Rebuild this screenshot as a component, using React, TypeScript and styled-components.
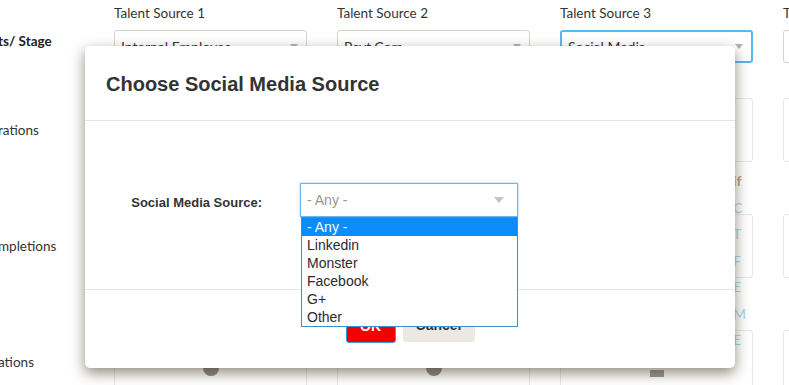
import React from 'react'
import styled, { createGlobalStyle } from 'styled-components'

const GlobalStyle = createGlobalStyle`
	html, body {
		margin: 0;
		padding: 0;
		background: #ffffff;
	}
	body {
		font-family: Lato, 'Noto Sans', sans-serif;
		overflow: hidden;
	}
`

const sources = [
	{ caption: 'Talent Source 1', value: 'Internal Employee', mark: 'circle' },
	{ caption: 'Talent Source 2', value: 'Rcvt.Com', mark: 'circle' },
	{ caption: 'Talent Source 3', value: 'Social Media', mark: 'bar', focused: true },
	{ caption: 'Talent Source 4', value: '', mark: 'none' },
]

const rowLabels = ['rations', 'mpletions', 'ations']
const sideLetters = ['C', 'T', 'F', 'E', 'M', 'E']
const options = ['- Any -', 'Linkedin', 'Monster', 'Facebook', 'G+', 'Other']

export default function App() {
	return (
		<>
			<GlobalStyle />
			<Page>
				<LeftCol>
					<StageHeading>ts/ Stage</StageHeading>
					<RowLabels>
						{rowLabels.map((l, i) => (
							<RowLabel key={i}>{l}</RowLabel>
						))}
					</RowLabels>
				</LeftCol>

				{sources.map((s, i) => (
					<SourceCol key={i}>
						<Caption>{s.caption}</Caption>
						<SourceSelect $focused={!!s.focused}>
							<span>{s.value}</span>
							<SmallArrow />
						</SourceSelect>
						<Cells>
							<Cell />
							<Cell />
							<Cell>
								{s.mark === 'circle' && <Dot />}
								{s.mark === 'bar' && <Bar />}
							</Cell>
						</Cells>
						{s.focused && (
							<SideList>
								<SideHint>if</SideHint>
								{sideLetters.map((c, j) => (
									<SideLetter key={j}>{c}</SideLetter>
								))}
							</SideList>
						)}
					</SourceCol>
				))}

				<Modal>
					<ModalHeader>
						<ModalTitle>Choose Social Media Source</ModalTitle>
					</ModalHeader>
					<ModalBody>
						<FieldLabel>Social Media Source:</FieldLabel>
						<SelectWrap>
							<ModalSelect>
								<Placeholder>- Any -</Placeholder>
								<Caret />
							</ModalSelect>
							<OptionList>
								{options.map((o, i) => (
									<Option key={o} $active={i === 0}>
										{o}
									</Option>
								))}
							</OptionList>
						</SelectWrap>
					</ModalBody>
					<ModalFooter>
						<OkButton>OK</OkButton>
						<CancelButton>Cancel</CancelButton>
					</ModalFooter>
				</Modal>
			</Page>
		</>
	)
}

const Page = styled.div`
	position: relative;
	width: 789px;
	height: 385px;
	overflow: hidden;
	display: flex;
	gap: 30px;
	color: #333333;
`

const LeftCol = styled.div`
	width: 84px;
	flex-shrink: 0;
	display: flex;
	flex-direction: column;
`

const StageHeading = styled.div`
	flex-shrink: 0;
	margin-top: 31px;
	height: 20px;
	line-height: 20px;
	font-size: 13.5px;
	font-weight: 700;
	color: #222222;
	white-space: nowrap;
	margin-left: -2px;
`

const RowLabels = styled.div`
	flex-shrink: 0;
	margin-top: 47px;
	display: flex;
	flex-direction: column;
	gap: 52px;
`

const RowLabel = styled.div`
	flex-shrink: 0;
	height: 64px;
	line-height: 64px;
	font-size: 13.5px;
	color: #333333;
	white-space: nowrap;
	margin-left: -2px;
`

const SourceCol = styled.div`
	position: relative;
	width: 193px;
	flex-shrink: 0;
	display: flex;
	flex-direction: column;
`

const Caption = styled.div`
	flex-shrink: 0;
	margin-top: 3px;
	height: 20px;
	line-height: 20px;
	font-size: 13.5px;
	color: #333333;
	white-space: nowrap;
`

const SourceSelect = styled.div<{ $focused: boolean }>`
	flex-shrink: 0;
	margin-top: 7px;
	height: 33px;
	box-sizing: border-box;
	border: ${(p) => (p.$focused ? '2px solid #55b8ef' : '1px solid #d6d1ca')};
	border-radius: 3px;
	display: flex;
	align-items: center;
	justify-content: space-between;
	padding: 0 8px 0 6px;
	font-size: 14px;
	color: #333333;
	white-space: nowrap;
`

const SmallArrow = styled.span`
	width: 0;
	height: 0;
	border-left: 4px solid transparent;
	border-right: 4px solid transparent;
	border-top: 5px solid #b8b1a8;
`

const Cells = styled.div`
	flex-shrink: 0;
	margin-top: 35px;
	display: flex;
	flex-direction: column;
	gap: 52px;
`

const Cell = styled.div`
	flex-shrink: 0;
	height: 64px;
	box-sizing: border-box;
	border: 1px solid #e6e6e6;
	border-radius: 3px;
	display: flex;
	justify-content: center;
	padding-top: 29px;
`

const Dot = styled.span`
	width: 16px;
	height: 16px;
	border-radius: 50%;
	background: #8c8782;
`

const Bar = styled.span`
	margin-top: 10px;
	width: 14px;
	height: 7px;
	background: #9c9790;
`

const SideList = styled.div`
	position: absolute;
	top: 168px;
	right: 7px;
	display: flex;
	flex-direction: column;
	font-size: 14px;
	line-height: 26.5px;
`

const SideHint = styled.span`
	color: #c89a80;
	font-weight: 700;
`

const SideLetter = styled.span`
	color: #9fdbe6;
`

const Modal = styled.div`
	position: absolute;
	left: 85px;
	top: 46px;
	width: 650px;
	height: 322px;
	background: #ffffff;
	border-radius: 5px;
	box-shadow: 0 5px 14px rgba(70, 60, 40, 0.6);
	font-family: 'Liberation Sans', Arial, sans-serif;
	color: #333333;
	display: flex;
	flex-direction: column;
`

const ModalHeader = styled.div`
	height: 75px;
	box-sizing: border-box;
	border-bottom: 1px solid #e5e5e5;
	display: flex;
	align-items: center;
	padding: 2px 21px 0;
`

const ModalTitle = styled.h4`
	margin: 0;
	font-size: 20px;
	font-weight: 700;
	color: #333333;
`

const ModalBody = styled.div`
	height: 168px;
	box-sizing: border-box;
	padding-top: 62px;
	display: grid;
	grid-template-columns: 215px 218px;
	align-content: start;
	align-items: center;
`

const FieldLabel = styled.label`
	justify-self: end;
	padding-right: 38px;
	padding-top: 5px;
	font-size: 13px;
	font-weight: 700;
	color: #333333;
`

const SelectWrap = styled.div`
	position: relative;
`

const ModalSelect = styled.div`
	height: 34px;
	box-sizing: border-box;
	border: 1px solid #66b8ec;
	box-shadow: 0 0 2px rgba(102, 175, 233, 0.7);
	display: flex;
	align-items: center;
	justify-content: space-between;
	padding: 0 13px 0 6px;
`

const Placeholder = styled.span`
	font-size: 14px;
	color: #9a958f;
`

const Caret = styled.span`
	width: 0;
	height: 0;
	border-left: 5px solid transparent;
	border-right: 5px solid transparent;
	border-top: 6px solid #c9c2b9;
`

const OptionList = styled.div`
	position: absolute;
	top: 34px;
	left: 1px;
	width: 217px;
	box-sizing: border-box;
	border: 1px solid #3d8fcc;
	background: #ffffff;
	display: flex;
	flex-direction: column;
	z-index: 2;
`

const Option = styled.div<{ $active: boolean }>`
	height: 18px;
	line-height: 18px;
	padding-left: 5px;
	font-size: 14px;
	color: ${(p) => (p.$active ? '#ffffff' : '#2b2b2b')};
	background: ${(p) => (p.$active ? '#0a8cfb' : 'transparent')};
`

const ModalFooter = styled.div`
	flex: 1;
	border-top: 1px solid #e5e5e5;
	display: flex;
	justify-content: center;
	align-items: flex-start;
	gap: 7px;
	padding-top: 18px;
`

const OkButton = styled.button`
	width: 50px;
	height: 35px;
	border: 1px solid #3c9ad8;
	border-radius: 3px;
	background: #f50000;
	color: #ffffff;
	font-family: 'Liberation Sans', Arial, sans-serif;
	font-size: 14px;
	font-weight: 700;
	padding: 0;
`

const CancelButton = styled.button`
	width: 72px;
	height: 34px;
	border: none;
	border-radius: 3px;
	background: #ece9e5;
	color: #333333;
	font-family: 'Liberation Sans', Arial, sans-serif;
	font-size: 14px;
	font-weight: 700;
	padding: 0;
`
